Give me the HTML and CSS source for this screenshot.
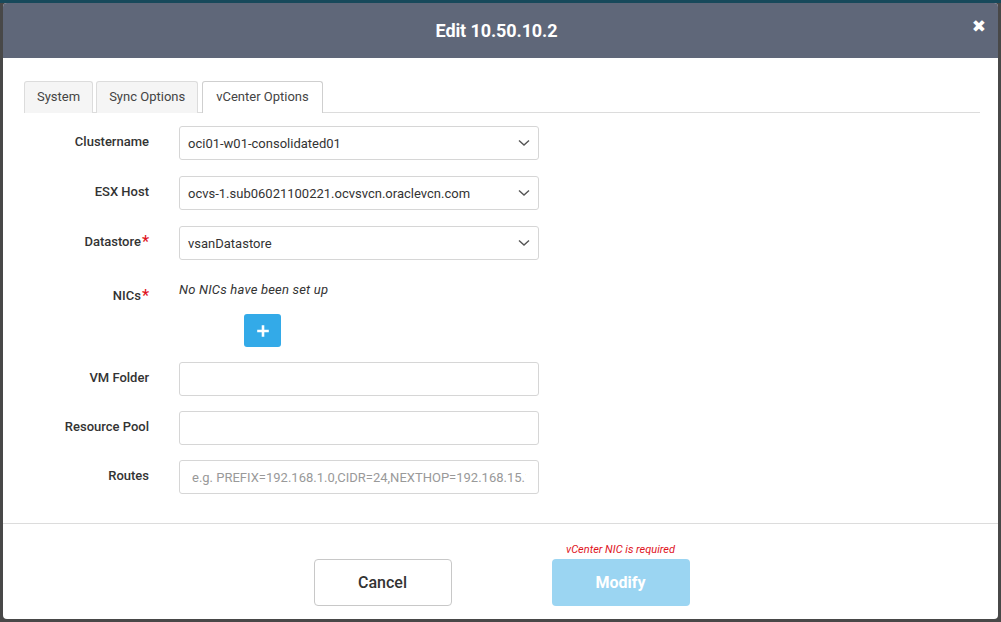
FILE: index.html
```html
<!DOCTYPE html>
<html lang="en">
<head>
    <meta charset="UTF-8">
    <meta name="viewport" content="width=device-width, initial-scale=1.0">
    <title>Edit 10.50.10.2</title>
    <link rel="stylesheet" href="styles.css">
</head>
<body>
    <div class="modal">
        <div class="modal__header">
            <h1 class="modal__title">Edit 10.50.10.2</h1>
            <button class="modal__close" aria-label="Close">&#x2716;</button>
        </div>

        <div class="modal__body">
            <div class="tabs">
                <button class="tabs__tab">System</button>
                <button class="tabs__tab">Sync Options</button>
                <button class="tabs__tab tabs__tab--active">vCenter Options</button>
            </div>

            <div class="form">
                <label class="form__label">Clustername</label>
                <div class="select">
                    <span>oci01-w01-consolidated01</span>
                    <svg class="select__chevron" viewBox="0 0 12 8" width="12" height="8"><polyline points="1,1.5 6,6 11,1.5" /></svg>
                </div>

                <label class="form__label">ESX Host</label>
                <div class="select">
                    <span>ocvs-1.sub06021100221.ocvsvcn.oraclevcn.com</span>
                    <svg class="select__chevron" viewBox="0 0 12 8" width="12" height="8"><polyline points="1,1.5 6,6 11,1.5" /></svg>
                </div>

                <label class="form__label">Datastore<span class="req">*</span></label>
                <div class="select">
                    <span>vsanDatastore</span>
                    <svg class="select__chevron" viewBox="0 0 12 8" width="12" height="8"><polyline points="1,1.5 6,6 11,1.5" /></svg>
                </div>

                <label class="form__label form__label--top">NICs<span class="req">*</span></label>
                <div class="nics">
                    <em class="nics__empty">No NICs have been set up</em>
                    <button class="nics__add" aria-label="Add NIC">
                        <svg viewBox="0 0 12 12" width="12" height="12"><path d="M6 1.5v9M1.5 6h9" /></svg>
                    </button>
                </div>

                <label class="form__label">VM Folder</label>
                <input class="input" type="text">

                <label class="form__label">Resource Pool</label>
                <input class="input" type="text">

                <label class="form__label">Routes</label>
                <input class="input" type="text" placeholder="e.g. PREFIX=192.168.1.0,CIDR=24,NEXTHOP=192.168.15.1">
            </div>
        </div>

        <div class="modal__footer">
            <button class="btn btn--cancel">Cancel</button>
            <div class="submit">
                <span class="submit__error">vCenter NIC is required</span>
                <button class="btn btn--primary" disabled>Modify</button>
            </div>
        </div>
    </div>
</body>
</html>
```

FILE: styles.css
```css
* {
	border: 0;
	box-sizing: border-box;
	margin: 0;
	padding: 0;
}

:root {
	--header: #5f6779;
	--line: #dcdcdc;
	--border: #d6d6d6;
	--fg: #333;
	--blue: #33aae8;
	--blue-off: #9bd5f2;
	--red: #e0141e;
}

body {
	background-color: #484848;
	border-top: 3px solid #17495b;
	padding: 0 3px 3px 3px;
	height: 100vh;
	font-family: Roboto, "Liberation Sans", sans-serif;
	color: var(--fg);
}

button,
input {
	appearance: none;
	font-family: inherit;
	background: none;
}

.modal {
	background-color: #fff;
	border-radius: 4px;
	height: 616px;
	overflow: hidden;
	display: flex;
	flex-direction: column;
}

.modal__header {
	position: relative;
	background-color: var(--header);
	height: 55px;
	display: flex;
	align-items: center;
	justify-content: center;
}

.modal__title {
	color: #fff;
	font-size: 18px;
	font-weight: 700;
	letter-spacing: -0.1px;
	padding-right: 8px;
}

.modal__close {
	position: absolute;
	right: 12px;
	top: 15px;
	color: #fff;
	font-size: 17px;
	font-family: "DejaVu Sans", sans-serif;
	line-height: 1;
}

.modal__body {
	padding: 23px 18px 0 21px;
	height: 466px;
	border-bottom: 1px solid var(--line);
}

.tabs {
	display: flex;
	gap: 3px;
	border-bottom: 1px solid var(--line);
}

.tabs__tab {
	font-size: 13px;
	color: #444;
	height: 32px;
	padding: 0 12px 3px;
	background-color: #f5f5f5;
	border: 1px solid var(--line);
	border-bottom: 0;
	border-radius: 3px 3px 0 0;
	margin-bottom: -1px;
}

.tabs__tab--active {
	background-color: #fff;
	border-color: #cfcfcf;
	padding: 0 13px 3px;
	margin-left: 1px;
}

.form {
	display: grid;
	grid-template-columns: 125px 360px;
	column-gap: 30px;
	row-gap: 16px;
	padding-top: 13px;
	align-items: center;
}

.form__label {
	text-align: right;
	font-size: 13px;
	font-weight: 500;
	color: #333;
	padding-bottom: 4px;
}

.form__label--top {
	align-self: start;
	padding-top: 10px;
	padding-bottom: 0;
}

.req {
	color: var(--red);
	font-size: 16px;
	vertical-align: -1px;
	margin-left: 1px;
}

.select,
.input {
	height: 34px;
	border: 1px solid var(--border);
	border-radius: 3px;
	font-size: 13px;
	color: #333;
}

.select {
	display: flex;
	align-items: center;
	justify-content: space-between;
	padding: 0 8px 0 8px;
}

.select__chevron {
	fill: none;
	stroke: #555;
	stroke-width: 1.4px;
}

.input {
	width: 100%;
	padding: 0 12px;
	margin-top: -1px;
}

.input::placeholder {
	color: #999;
}

.nics {
	display: flex;
	flex-direction: column;
	align-items: flex-start;
	padding-top: 6px;
}

.nics__empty {
	font-size: 13px;
	color: #333;
	line-height: 16px;
	letter-spacing: 0.2px;
}

.nics__add {
	margin: 16px 0 0 65px;
	width: 37px;
	height: 33px;
	background-color: var(--blue);
	border-radius: 3px;
	display: flex;
	align-items: center;
	justify-content: center;

	svg {
		stroke: #fff;
		stroke-width: 2.6px;
		stroke-linecap: square;
	}
}

.modal__footer {
	flex: 1;
	display: flex;
	justify-content: center;
	align-items: flex-end;
	gap: 100px;
	padding-bottom: 13px;
	padding-left: 2px;
}

.submit {
	display: flex;
	flex-direction: column;
	align-items: center;
}

.submit__error {
	font-size: 11px;
	font-style: italic;
	color: var(--red);
	margin-bottom: 3px;
}

.btn {
	width: 138px;
	height: 47px;
	border-radius: 4px;
	font-size: 16px;
	font-weight: 500;
}

.btn--cancel {
	border: 1px solid #c8c8c8;
	color: #333;
	background-color: #fff;
}

.btn--primary {
	background-color: var(--blue-off);
	color: #fff;
	font-weight: 700;
}
```
